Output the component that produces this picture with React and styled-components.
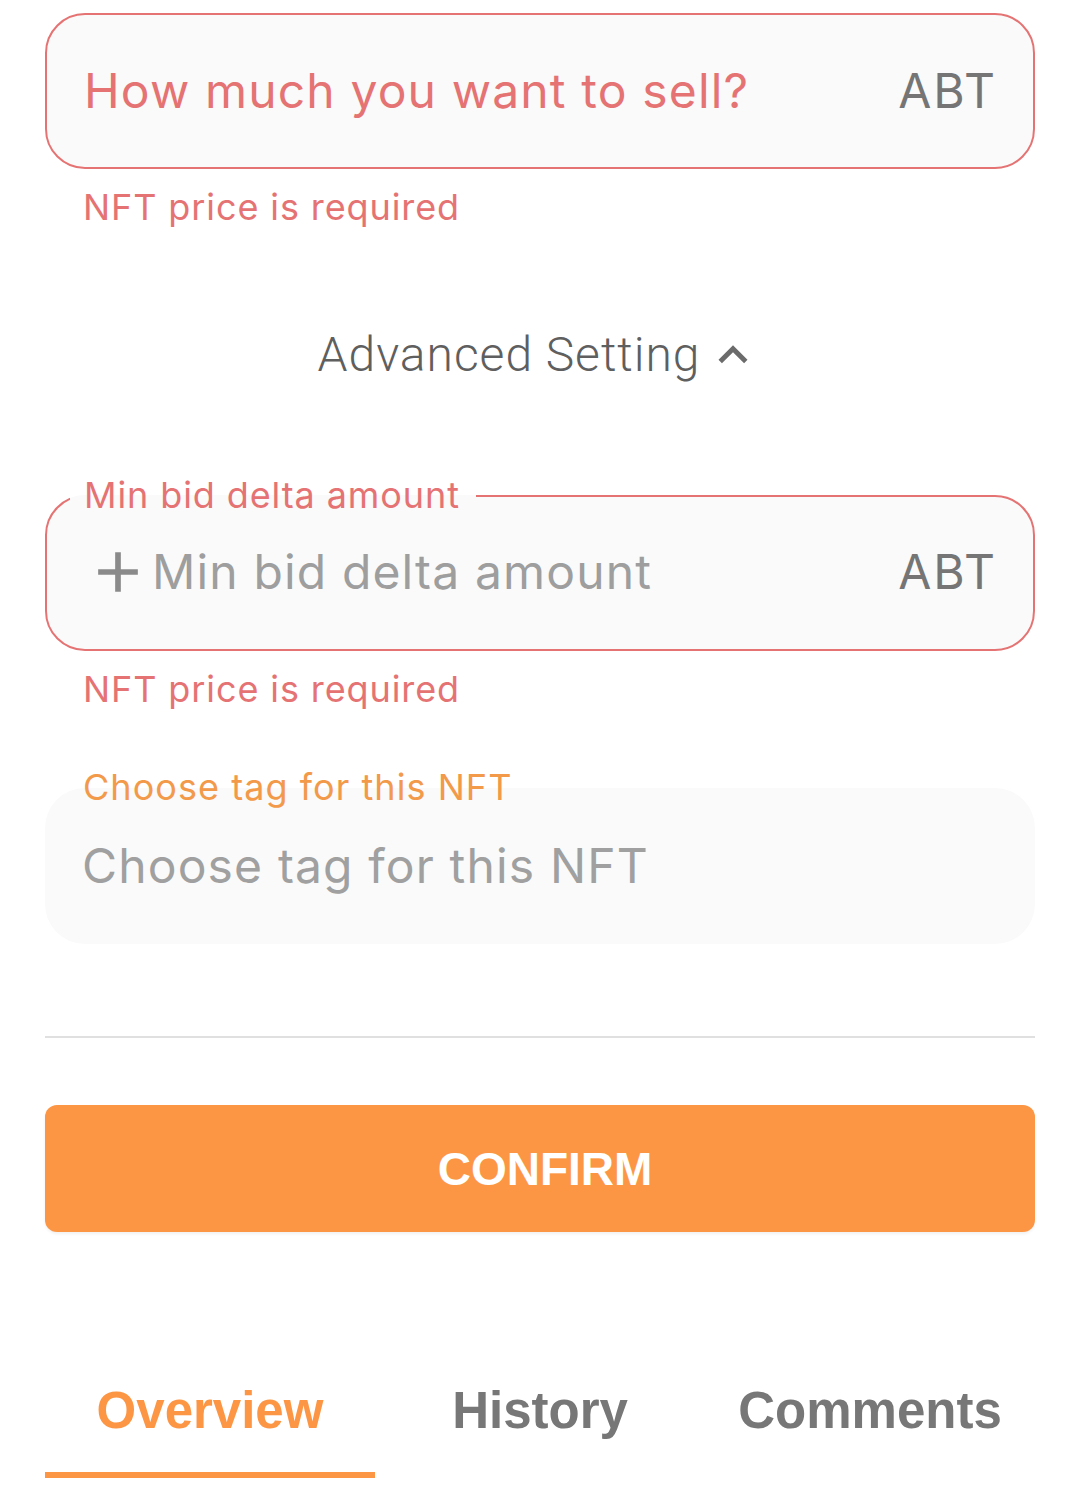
import React, { useState } from "react";
import styled, { createGlobalStyle } from "styled-components";

const RED = "#e57373";
const ORANGE = "#fd9644";

const GlobalStyle = createGlobalStyle`
  * { box-sizing: border-box; }
  body {
    margin: 0;
    background: #ffffff;
    font-family: Inter, "Noto Sans", sans-serif;
    letter-spacing: 0.9px;
  }
`;

const ExpandLess = () => (
  <ChevronIcon viewBox="0 0 24 24">
    <path d="M12 8l-6 6 1.41 1.41L12 10.83l4.59 4.58L18 14z" />
  </ChevronIcon>
);

const AddIcon = () => (
  <PlusIcon viewBox="0 0 24 24">
    <path d="M19 13h-6v6h-2v-6H5v-2h6V5h2v6h6v2z" />
  </PlusIcon>
);

const TABS = ["Overview", "History", "Comments"];

const App = () => {
  const [tab, setTab] = useState(0);
  const [open, setOpen] = useState(true);

  return (
    <>
      <GlobalStyle />
      <Page>
        <AmountBox>
          <FieldText $color={RED}>How much you want to sell?</FieldText>
          <Unit>ABT</Unit>
        </AmountBox>
        <HelperText $top={17}>NFT price is required</HelperText>

        <AdvancedToggle onClick={() => setOpen(!open)}>
          Advanced Setting
          <ExpandLess />
        </AdvancedToggle>

        <OutlinedBox>
          <Legend>Min bid delta amount</Legend>
          <OutlinedRow>
            <AddIcon />
            <FieldText $color="#9e9e9e">Min bid delta amount</FieldText>
            <Unit>ABT</Unit>
          </OutlinedRow>
        </OutlinedBox>
        <HelperText $top={17}>NFT price is required</HelperText>

        <FilledLabel>Choose tag for this NFT</FilledLabel>
        <FilledBox>
          <FieldText $color="#a0a0a0">Choose tag for this NFT</FieldText>
        </FilledBox>

        <Divider />

        <ConfirmButton>CONFIRM</ConfirmButton>

        <TabBar>
          {TABS.map((name, i) => (
            <Tab key={name} $active={tab === i} onClick={() => setTab(i)}>
              <TabLabel>{name}</TabLabel>
              <Indicator $active={tab === i} />
            </Tab>
          ))}
        </TabBar>
      </Page>
    </>
  );
};

export default App;

const Page = styled.div`
  width: 1080px;
  height: 1512px;
  padding: 0 45px;
  overflow: hidden;
  display: flex;
  flex-direction: column;
`;

const AmountBox = styled.div`
  margin-top: 13px;
  height: 156px;
  border: 2px solid ${RED};
  border-radius: 40px;
  background: #fafafa;
  display: flex;
  align-items: center;
  padding: 0 36px 0 37px;
`;

const FieldText = styled.span`
  flex: 1;
  font-size: 48px;
  line-height: 58px;
  letter-spacing: 1.15px;
  color: ${(p) => p.$color};
  white-space: nowrap;
`;

const Unit = styled.span`
  font-size: 48px;
  line-height: 58px;
  letter-spacing: 2px;
  color: #757575;
`;

const HelperText = styled.div`
  margin-top: ${(p) => p.$top}px;
  padding-left: 38px;
  font-size: 36px;
  line-height: 43px;
  color: ${RED};
`;

const AdvancedToggle = styled.button`
  margin-top: 97px;
  align-self: center;
  display: flex;
  align-items: center;
  background: none;
  border: none;
  padding: 0;
  font-family: Roboto, "Noto Sans", sans-serif;
  font-weight: 300;
  font-size: 48px;
  line-height: 58px;
  letter-spacing: 0.02em;
  color: #5f5f5f;
  cursor: pointer;
`;

const ChevronIcon = styled.svg`
  width: 58px;
  height: 58px;
  margin-left: 4px;
  fill: #6b6b6b;
`;

const OutlinedBox = styled.fieldset`
  margin: 90px 0 0;
  min-width: 0;
  border: 2px solid ${RED};
  border-radius: 40px;
  background: #fafafa;
  padding: 0 36px 22px 37px;
`;

const Legend = styled.legend`
  margin-left: -14px;
  padding: 0 16px 0 14px;
  font-size: 36px;
  line-height: 43px;
  color: ${RED};
`;

const OutlinedRow = styled.div`
  height: 110px;
  display: flex;
  align-items: center;
`;

const PlusIcon = styled.svg`
  width: 68px;
  height: 68px;
  flex-shrink: 0;
  fill: #8a8a8a;
`;

const FilledLabel = styled.label`
  position: relative;
  z-index: 1;
  margin: 55px 0 -21px;
  padding-left: 38px;
  font-size: 36px;
  line-height: 43px;
  letter-spacing: 1.05px;
  color: #f2994a;
`;

const FilledBox = styled.div`
  height: 156px;
  border-radius: 40px;
  background: #fafafa;
  display: flex;
  align-items: center;
  padding: 0 36px 0 37px;
`;

const Divider = styled.hr`
  margin: 92px 0 0;
  border: none;
  height: 2px;
  background: #e0e0e0;
`;

const ConfirmButton = styled.button`
  margin-top: 67px;
  height: 127px;
  border: none;
  border-radius: 12px;
  background: ${ORANGE};
  box-shadow: 0 2px 3px rgba(0, 0, 0, 0.06);
  color: #ffffff;
  padding: 0 0 0 10px;
  font-family: "Liberation Sans", Arial, sans-serif;
  font-weight: 700;
  font-size: 46px;
  letter-spacing: 0;
  cursor: pointer;
`;

const TabBar = styled.div`
  margin-top: 107px;
  display: grid;
  grid-template-columns: repeat(3, 1fr);
`;

const Tab = styled.button`
  display: flex;
  flex-direction: column;
  align-items: center;
  background: none;
  border: none;
  padding: 42px 0 0;
  color: ${(p) => (p.$active ? ORANGE : "#777777")};
  cursor: pointer;
`;

const TabLabel = styled.span`
  font-family: "Liberation Sans", Arial, sans-serif;
  font-weight: 700;
  font-size: 51px;
  line-height: 59px;
  letter-spacing: 0;
`;

const Indicator = styled.span`
  align-self: stretch;
  margin-top: 32px;
  height: 6px;
  background: ${(p) => (p.$active ? ORANGE : "transparent")};
`;
